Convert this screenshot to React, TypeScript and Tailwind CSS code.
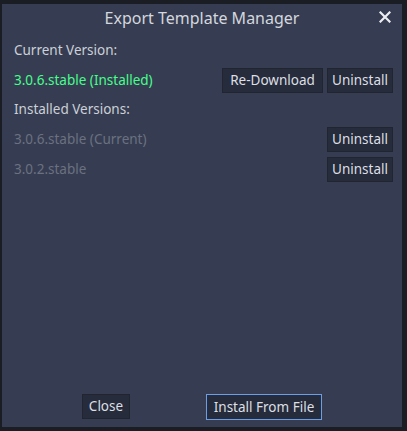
import React from "react";

const Btn = ({ children, className = "" }: { children: React.ReactNode; className?: string }) => (
  <div className={`h-[25px] flex items-center justify-center bg-[#262c3b] border border-[#20252f] text-[#dcdfe4] text-[13.5px] ${className}`}>
    {children}
  </div>
);

export default function App() {
  return (
    <div className="w-[407px] h-[431px] bg-[#1a1d24] relative overflow-hidden" style={{ fontFamily: '"Noto Sans", sans-serif' }}>
      <div className="absolute left-[2px] top-[4px] w-[400px] h-[423px] bg-[#363d52] flex flex-col">
        <div className="h-[28px] flex items-center justify-center relative text-[16px] text-[#d4d7dd]">
          Export Template Manager
          <svg className="absolute right-[11px] top-[7px]" width="12" height="12" viewBox="0 0 12 12">
            <path d="M1.5 1.5 L10.5 10.5 M10.5 1.5 L1.5 10.5" stroke="#eceef2" strokeWidth="2.2" strokeLinecap="square" />
          </svg>
        </div>
        <div className="px-[12px] flex flex-col">
          <div className="h-[26px] flex items-center text-[13.5px] text-[#ccd0d7] mt-[5px]">Current Version:</div>
          <div className="h-[29px] flex items-center mt-[3px]">
            <div className="flex-1 text-[13.5px] text-[#45ff8b]">3.0.6.stable (Installed)</div>
            <Btn className="w-[101px]">Re-Download</Btn>
            <Btn className="w-[66px] ml-[4px] mr-[-3px]">Uninstall</Btn>
          </div>
          <div className="h-[26px] flex items-center text-[13.5px] text-[#ccd0d7] mt-[1px]">Installed Versions:</div>
          <div className="h-[30px] flex items-center mt-[2px]">
            <div className="flex-1 text-[13.5px] text-[#6b7180]">3.0.6.stable (Current)</div>
            <Btn className="w-[66px] mr-[-3px]">Uninstall</Btn>
          </div>
          <div className="h-[30px] flex items-center">
            <div className="flex-1 text-[13.5px] text-[#6b7180]">3.0.2.stable</div>
            <Btn className="w-[66px] mr-[-3px]">Uninstall</Btn>
          </div>
        </div>
        <div className="flex-1" />
        <div className="h-[26px] mb-[7px] relative">
          <Btn className="absolute left-[80px] top-0 w-[48px]">Close</Btn>
          <div className="absolute left-[204px] top-0 w-[116px] h-[26px] flex items-center justify-center bg-[#262c3b] border border-[#6b9ee4] text-[#dcdfe4] text-[13.5px]">
            Install From File
          </div>
        </div>
      </div>
    </div>
  );
}
